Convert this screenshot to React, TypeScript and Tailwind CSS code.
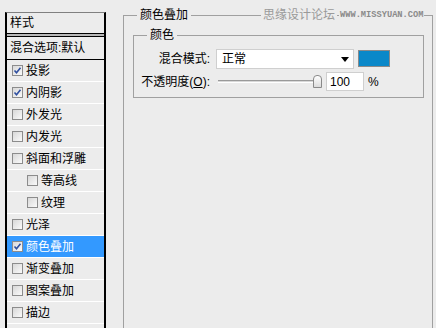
import React from "react";

const FONT = '"Liberation Sans", "Noto Sans CJK SC", sans-serif';

function Check({ checked }: { checked: boolean }) {
  return (
    <div className="w-[11px] h-[11px] shrink-0 border border-[#8c8c8c] bg-gradient-to-br from-[#d8d8d8] to-[#fafafa] flex items-center justify-center">
      {checked && (
        <svg width="9" height="9" viewBox="0 0 9 9">
          <path d="M1.5 4.5 L3.5 6.8 L7.5 1.8" fill="none" stroke="#2f4fa0" strokeWidth="1.6" />
        </svg>
      )}
    </div>
  );
}

const rows: { label: string; checked: boolean; indent?: boolean; selected?: boolean }[] = [
  { label: "投影", checked: true },
  { label: "内阴影", checked: true },
  { label: "外发光", checked: false },
  { label: "内发光", checked: false },
  { label: "斜面和浮雕", checked: false },
  { label: "等高线", checked: false, indent: true },
  { label: "纹理", checked: false, indent: true },
  { label: "光泽", checked: false },
  { label: "颜色叠加", checked: true, selected: true },
  { label: "渐变叠加", checked: false },
  { label: "图案叠加", checked: false },
  { label: "描边", checked: false },
];

export default function App() {
  return (
    <div
      className="w-[436px] h-[328px] bg-[#ececec] flex overflow-hidden text-[12px] text-black leading-none"
      style={{ fontFamily: FONT }}
    >
      {/* Left styles list */}
      <div className="ml-[5px] mt-[12px] w-[101px] h-[330px] shrink-0 border-t border-t-[#808080] border-x-2 border-x-black flex flex-col">
        <div className="h-[20px] pl-[3px] flex items-center">样式</div>
        <div className="h-[4px] border-y border-black bg-[#b8b8b8]" />
        <div className="h-[23px] border-b border-black pl-[3px] flex items-center">混合选项:默认</div>
        {rows.map((r) => (
          <div
            key={r.label}
            className={
              "h-[22px] border-b border-white flex items-center " +
              (r.indent ? "pl-[20px] " : "pl-[5px] ") +
              (r.selected ? "bg-[#3399ff] text-white" : "")
            }
          >
            <Check checked={r.checked} />
            <span className="ml-[3px]">{r.label}</span>
          </div>
        ))}
      </div>

      {/* Right panel */}
      <div className="ml-[17px] mt-[15px] w-[310px] h-[330px] shrink-0 border border-[#a0a0a0] relative">
        <span className="absolute left-[13px] top-[-9px] h-[16px] px-[3px] bg-[#ececec] flex items-center">颜色叠加</span>
        <span className="absolute left-[137px] top-[-9px] h-[16px] px-[2px] bg-[#ececec] text-[#9a9a9a] flex items-center">思缘设计论坛</span>
        <span
          className="absolute left-[215px] top-[-5px] h-[9px] px-[1px] bg-[#ececec] text-[#8a8a8a] text-[8.7px] font-bold flex items-center"
          style={{ fontFamily: '"Liberation Mono", monospace' }}
        >
          WWW.MISSYUAN.COM
        </span>

        <div className="relative ml-[9px] mt-[19px] mr-[8px] h-[63px] border border-[#a0a0a0] pt-[13px] flex flex-col">
          <span className="absolute left-[13px] top-[-9px] h-[16px] px-[3px] bg-[#ececec] flex items-center">颜色</span>

          <div className="flex items-start h-[20px]">
            <div className="w-[76px] h-[20px] flex items-center justify-end">混合模式:</div>
            <div className="ml-[6px] w-[138px] h-[20px] bg-white border border-[#cfcfcf] flex items-center pl-[5px] pr-[4px]">
              <span className="flex-1">正常</span>
              <svg width="8" height="5" viewBox="0 0 8 5">
                <path d="M0 0 H8 L4 5 Z" fill="#000" />
              </svg>
            </div>
            <div className="ml-[4px] mt-[1px] w-[32px] h-[17px] bg-[#0a88c9] border border-[#8a8a8a]" />
          </div>

          <div className="flex items-center h-[19px] mt-[3px]">
            <div className="w-[76px] flex items-center justify-end">
              不透明度(<span className="underline">O</span>):
            </div>
            <div className="ml-[6px] pl-[2px] flex items-center">
              <div className="w-[95px] h-[3px] border-t border-t-[#9a9a9a] border-b border-b-white bg-[#d8d8d8]" />
              <div className="w-[9px] h-[13px] rounded-t-[4px] border border-[#8a8a8a] bg-gradient-to-b from-white to-[#dcdcdc]" />
            </div>
            <div className="ml-[4px] w-[38px] h-[19px] bg-white border border-[#cfcfcf] flex items-center pl-[3px]">100</div>
            <span className="ml-[4px]">%</span>
          </div>
        </div>
      </div>
    </div>
  );
}
